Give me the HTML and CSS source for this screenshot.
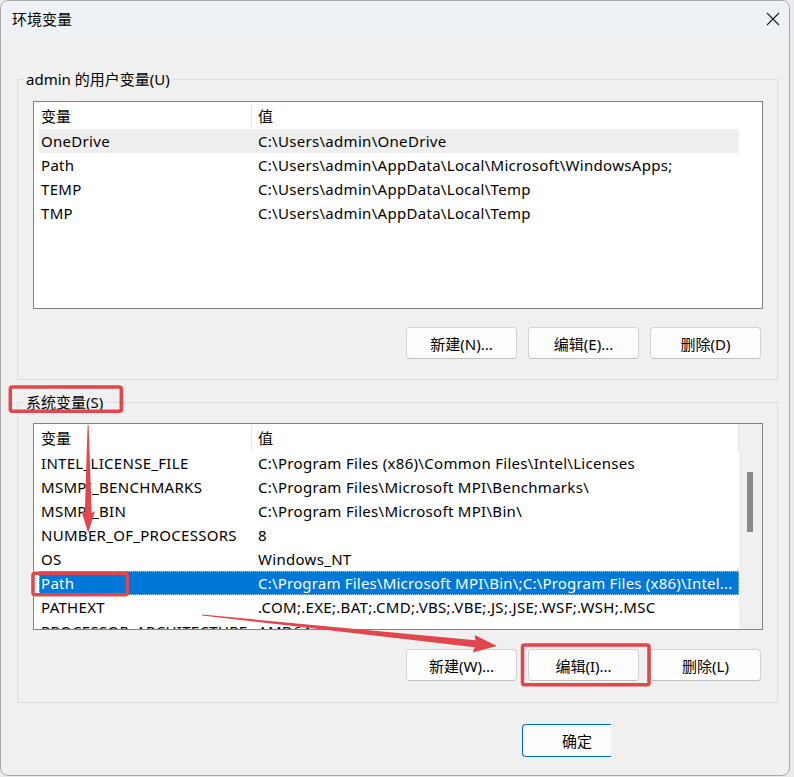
FILE: index.html
```html
<!DOCTYPE html>
<html lang="zh-CN">
<head>
<meta charset="utf-8">
<title>环境变量</title>
<link rel="stylesheet" href="styles.css">
</head>
<body>
<div class="window">
  <div class="titlebar">
    <span class="title">环境变量</span>
    <svg class="close" width="14" height="14" viewBox="0 0 14 14"><path d="M1 1 L13 13 M13 1 L1 13" stroke="#1b1b1b" stroke-width="1.1" fill="none"/></svg>
  </div>
  <div class="content">
    <section class="group group-user">
      <div class="group-label">admin 的用户变量(U)</div>
      <div class="list list-user">
        <div class="list-main">
          <div class="list-head"><span class="c1">变量</span><span class="sep"></span><span class="c2">值</span></div>
          <div class="row hot"><span class="c1">OneDrive</span><span class="c2">C:\Users\admin\OneDrive</span></div>
          <div class="row"><span class="c1">Path</span><span class="c2">C:\Users\admin\AppData\Local\Microsoft\WindowsApps;</span></div>
          <div class="row"><span class="c1">TEMP</span><span class="c2">C:\Users\admin\AppData\Local\Temp</span></div>
          <div class="row"><span class="c1">TMP</span><span class="c2">C:\Users\admin\AppData\Local\Temp</span></div>
        </div>
      </div>
      <div class="buttons">
        <button class="btn">新建(N)...</button>
        <button class="btn">编辑(E)...</button>
        <button class="btn">删除(D)</button>
      </div>
    </section>
    <section class="group group-sys">
      <div class="group-label">系统变量(S)</div>
      <div class="list list-sys">
        <div class="list-main">
          <div class="list-head head-end"><span class="c1">变量</span><span class="sep"></span><span class="c2">值</span></div>
          <div class="row"><span class="c1">INTEL_LICENSE_FILE</span><span class="c2">C:\Program Files (x86)\Common Files\Intel\Licenses</span></div>
          <div class="row"><span class="c1">MSMPI_BENCHMARKS</span><span class="c2">C:\Program Files\Microsoft MPI\Benchmarks\</span></div>
          <div class="row"><span class="c1">MSMPI_BIN</span><span class="c2">C:\Program Files\Microsoft MPI\Bin\</span></div>
          <div class="row"><span class="c1">NUMBER_OF_PROCESSORS</span><span class="c2">8</span></div>
          <div class="row"><span class="c1">OS</span><span class="c2">Windows_NT</span></div>
          <div class="row selected"><span class="c1">Path</span><span class="c2 tight">C:\Program Files\Microsoft MPI\Bin\;C:\Program Files (x86)\Intel...</span></div>
          <div class="row"><span class="c1">PATHEXT</span><span class="c2">.COM;.EXE;.BAT;.CMD;.VBS;.VBE;.JS;.JSE;.WSF;.WSH;.MSC</span></div>
          <div class="row"><span class="c1">PROCESSOR_ARCHITECTURE</span><span class="c2">AMD64</span></div>
        </div>
        <div class="scrollbar"><div class="thumb"></div></div>
      </div>
      <div class="buttons">
        <button class="btn">新建(W)...</button>
        <button class="btn">编辑(I)...</button>
        <button class="btn">删除(L)</button>
      </div>
    </section>
    <div class="footer">
      <button class="ok">确定</button>
    </div>
  </div>
</div>
<svg class="annot" width="794" height="777" viewBox="0 0 794 777">
  <g fill="none" stroke="#e0464b" stroke-width="3.5">
    <rect x="10.3" y="387" width="111" height="24.3" rx="2"/>
    <rect x="33" y="573.3" width="94.2" height="21.4" rx="2"/>
    <rect x="522.5" y="645" width="126.5" height="39.7" rx="2"/>
  </g>
  <g fill="#e0464b">
    <polygon points="87.6,425 88.6,425 91.6,513 95,511 88.2,533 81.4,511 84.8,513"/>
    <polygon points="202,614.5 475.5,640.2 474.6,635 497,646 472.6,652.6 474.7,647.2 202,615.5"/>
  </g>
</svg>
</body>
</html>
```
FILE: styles.css
```css
* { box-sizing: border-box; }
html, body { margin: 0; padding: 0; }
body {
  width: 794px;
  height: 777px;
  position: relative;
  overflow: hidden;
  background: #ebebeb;
  font-family: "Noto Sans", "Noto Sans CJK SC", sans-serif;
  font-size: 15px;
  color: #000;
}
.window {
  width: 790px;
  border: 1px solid #a8a8a8;
  border-radius: 8px;
  background: #f0f0f0;
  overflow: hidden;
}
.titlebar {
  height: 37px;
  background: #eef1f6;
  display: flex;
  align-items: center;
  justify-content: space-between;
  padding: 0 9px 1px 11px;
}
.title { line-height: 20px; }
.close { display: block; }
.content { padding: 41px 11px 18px 16px; }
.group {
  border: 1px solid #dcdcdc;
  padding: 0 14px 20px 15px;
}
.group-sys { margin-top: 22px; padding-bottom: 21px; }
.group-label {
  width: max-content;
  margin: -11px 0 0 -9px;
  padding: 0 2px;
  line-height: 20px;
  background: #f0f0f0;
}
.list {
  margin-top: 12px;
  height: 208px;
  border: 1px solid #828282;
  background: #fff;
  display: flex;
  overflow: hidden;
}
.list-sys { margin-top: 11px; height: 207px; }
.list-main { width: 705px; flex: none; overflow: hidden; }
.list-head {
  height: 27px;
  display: flex;
  align-items: center;
  padding-left: 7px;
  line-height: 20px;
}
.list-head .c1 { width: 210px; flex: none; }
.list-head .sep { width: 1px; height: 25px; background: #e5e5e5; flex: none; }
.list-head .c2 { padding-left: 6px; }
.head-end { border-right: 1px solid #e5e5e5; }
.row {
  display: flex;
  height: 24px;
  line-height: 24px;
  margin-left: 5px;
  padding-left: 2px;
  white-space: nowrap;
  letter-spacing: 0.3px;
}
.row .c1 { width: 217px; flex: none; }
.row .tight { letter-spacing: 0.2px; }
.row.hot { background: #efefef; }
.row.selected {
  background: #0078d7;
  color: #fff;
  outline: 1px dotted #9fd0f5;
  outline-offset: -1px;
}
.scrollbar {
  width: 23px;
  flex: none;
  background: #f0f0f0;
  padding: 48px 0 0 8px;
}
.thumb { width: 6px; height: 60px; background: #8a8a8a; }
.buttons {
  display: flex;
  justify-content: flex-end;
  gap: 11px;
  margin: 18px 2px 0 0;
}
.group-sys .buttons { margin-top: 19px; }
.btn {
  width: 111px;
  height: 32px;
  border: 1px solid #d3d3d3;
  border-bottom-color: #bfbfbf;
  border-radius: 4px;
  background: #fdfdfd;
  font: inherit;
  color: #000;
  padding: 0;
}
.footer { display: flex; margin-top: 21px; padding-left: 505px; }
.ok {
  width: 89px;
  height: 33px;
  border: 1px solid #0067c0;
  border-right: none;
  border-radius: 4px 0 0 4px;
  background: #fdfdfd;
  font: inherit;
  color: #000;
  padding: 0 0 0 39px;
  text-align: left;
}
.annot {
  position: absolute;
  left: 0;
  top: 0;
  pointer-events: none;
}
```
